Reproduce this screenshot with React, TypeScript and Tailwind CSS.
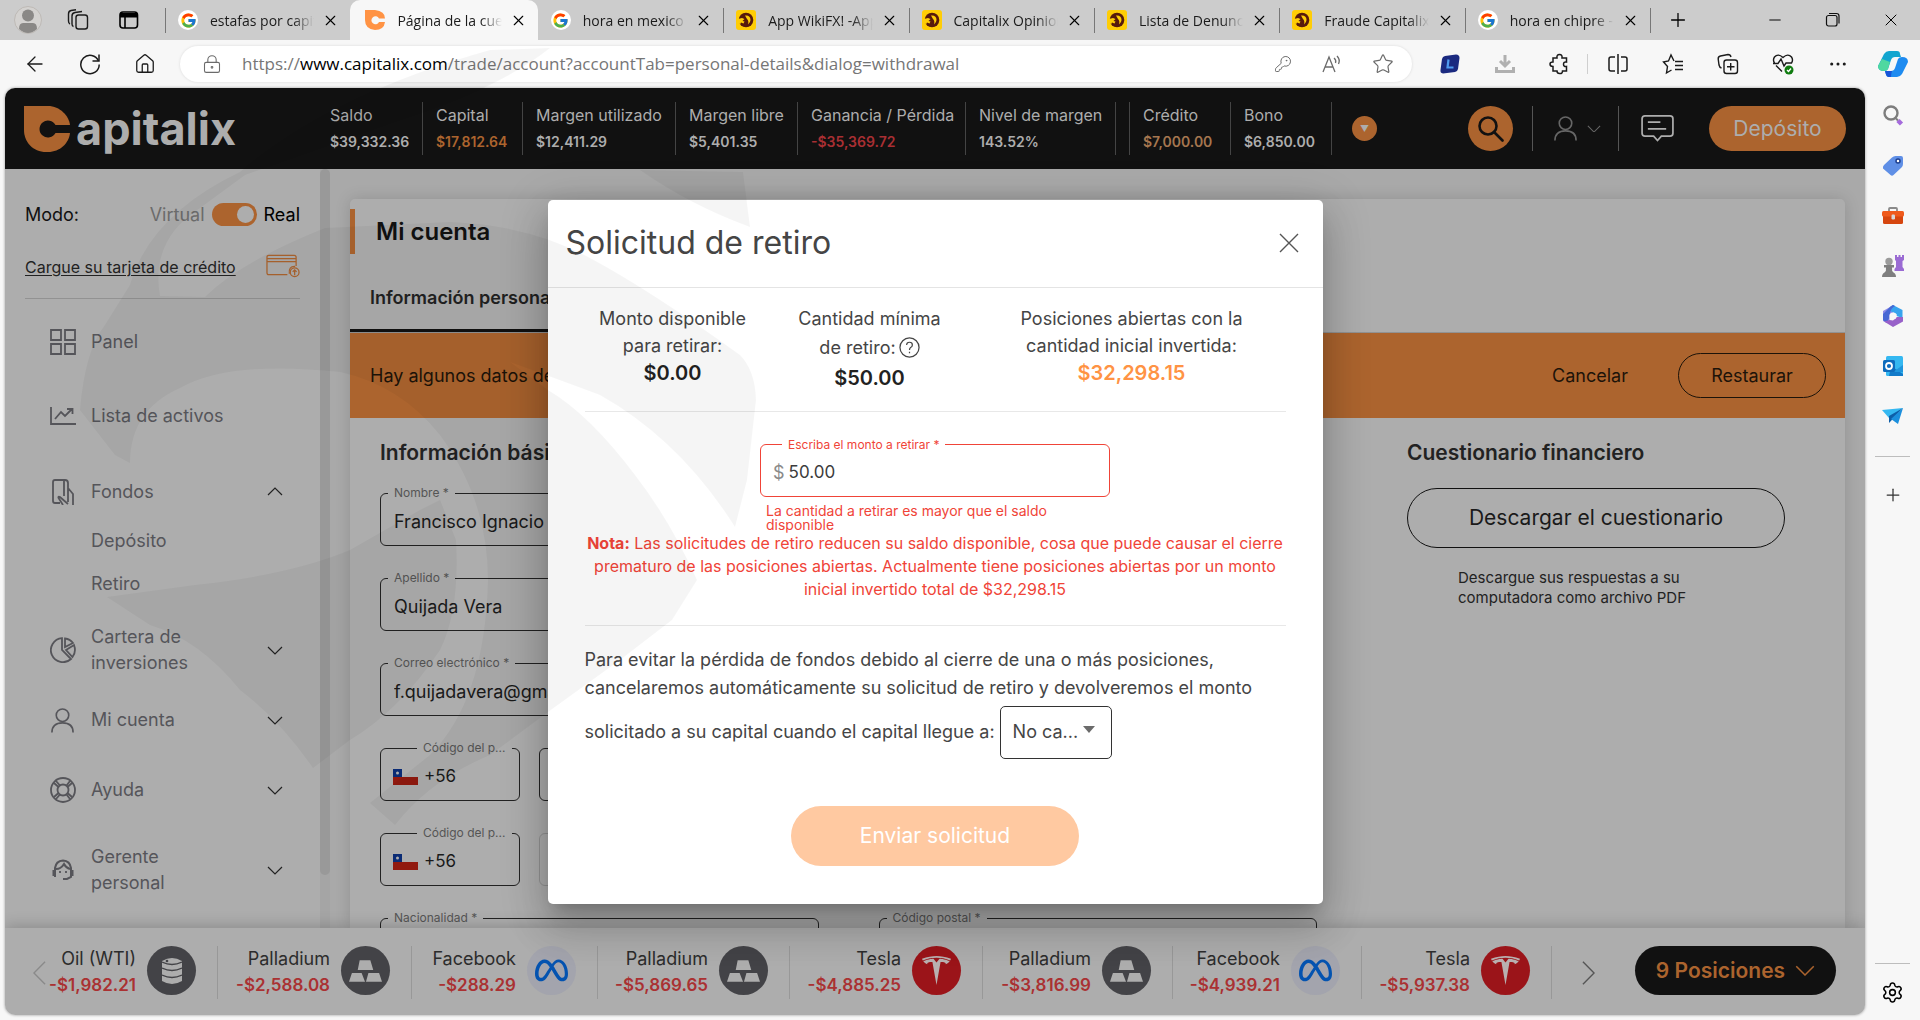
import type { ReactNode } from 'react'
import {
  ArrowLeft,
  Home as HomeIcon,
  KeyRound,
  LockKeyhole,
  Minus,
  Plus,
  Settings,
  Star,
  X,
} from 'lucide-react'
import { FaMeta } from 'react-icons/fa6'
import { FcGoogle } from 'react-icons/fc'
import { SiTesla } from 'react-icons/si'

type Brand = 'google' | 'capitalix' | 'wikifx'

const tabs: { title: string; icon: Brand; active?: boolean }[] = [
  { title: 'estafas por capit', icon: 'google' },
  { title: 'Página de la cuenta', icon: 'capitalix', active: true },
  { title: 'hora en mexico', icon: 'google' },
  { title: 'App WikiFX! -App', icon: 'wikifx' },
  { title: 'Capitalix Opinion', icon: 'wikifx' },
  { title: 'Lista de Denunc', icon: 'wikifx' },
  { title: 'Fraude Capitalix', icon: 'wikifx' },
  { title: 'hora en chipre -', icon: 'google' },
]

const stats = [
  { label: 'Saldo', value: '$39,332.36', width: 'w-[106px]', color: 'text-[#adadad]' },
  { label: 'Capital', value: '$17,812.64', width: 'w-[100px]', color: 'text-[#ac642e]' },
  { label: 'Margen utilizado', value: '$12,411.29', width: 'w-[153px]', color: 'text-[#adadad]' },
  { label: 'Margen libre', value: '$5,401.35', width: 'w-[122px]', color: 'text-[#adadad]' },
  { label: 'Ganancia / Pérdida', value: '-$35,369.72', width: 'w-[168px]', color: 'text-[#a92f33]' },
  { label: 'Nivel de margen', value: '143.52%', width: 'w-[150px]', color: 'text-[#adadad]' },
]

const credits = [
  { label: 'Crédito', value: '$7,000.00', width: 'w-[101px]', color: 'text-[#a5764f]' },
  { label: 'Bono', value: '$6,850.00', width: 'w-[101px]', color: 'text-[#adadad]' },
]

const positions = [
  { name: 'Oil (WTI)', value: '-$1,982.21', icon: 'oil', width: 'w-[172px]' },
  { name: 'Palladium', value: '-$2,588.08', icon: 'metal', width: 'w-[194px]' },
  { name: 'Facebook', value: '-$288.29', icon: 'meta', width: 'w-[186px]' },
  { name: 'Palladium', value: '-$5,869.65', icon: 'metal', width: 'w-[192px]' },
  { name: 'Tesla', value: '-$4,885.25', icon: 'tesla', width: 'w-[193px]' },
  { name: 'Palladium', value: '-$3,816.99', icon: 'metal', width: 'w-[190px]' },
  { name: 'Facebook', value: '-$4,939.21', icon: 'meta', width: 'w-[189px]' },
  { name: 'Tesla', value: '-$5,937.38', icon: 'tesla', width: 'w-[190px]' },
]

function CapitalixMark({ size, color }: { size: number; color: string }) {
  return (
    <svg viewBox="0 0 46 46" width={size} height={size} fill={color} className="shrink-0">
      <path d="M0 0H24C36 0 45 10 46 19V27C45 37 36 46 24 46H22C9 46 0 36 0 24Z" />
      <path d="M46 19H31.5A8.5 8.5 0 1 0 31.5 27H46Z" className="fill-[#111111]" />
    </svg>
  )
}

function TabIcon({ icon }: { icon: Brand }) {
  if (icon === 'google') {
    return (
      <span className="flex size-5 shrink-0 items-center justify-center rounded-full bg-white">
        <FcGoogle size={17} />
      </span>
    )
  }
  if (icon === 'capitalix') {
    return (
      <svg viewBox="0 0 20 20" width="20" height="20" className="shrink-0">
        <path d="M0 0H10Q20 1 20 8.5H14A4 4 0 1 0 14 12H20Q19 20 10 20Q0 19 0 10Z" fill="#ff9344" />
      </svg>
    )
  }
  return (
    <svg viewBox="0 0 20 20" width="20" height="20" className="shrink-0">
      <rect width="20" height="20" rx="3" fill="#ffcd05" />
      <circle cx="10" cy="10" r="7.3" fill="#571a0c" />
      <path d="M9 5.500Q14.500 5 14.500 10Q14.500 12.500 12 14.500Q13 10.500 11 9Z" fill="#ffcd05" />
      <path d="M2 9L6 8L8.500 9L6.500 11L8.500 11.500L7.500 13.500L5 12.500L4 14.500L2 12Z" fill="#ffcd05" />
    </svg>
  )
}

function TabBar() {
  return (
    <div className="flex h-10 shrink-0 items-center bg-[#cccccc]">
      <div className="flex w-[165px] shrink-0 items-center gap-[25px] pl-[14px]">
        <svg viewBox="0 0 28 28" width="28" height="28">
          <circle cx="14" cy="14" r="13.500" fill="#d4d2d0" stroke="#bdb9b5" />
          <circle cx="14" cy="9.500" r="6" fill="#8a8886" />
          <path d="M5 23Q5 17 9 17H19Q23 17 23 23Q14 31 5 23Z" fill="#8a8886" />
        </svg>
        {/* Workspaces */}
        <svg viewBox="0 0 22 22" width="22" height="22" fill="none" stroke="#1b1b1b" strokeWidth="1.4">
          <rect x="9" y="6" width="11.500" height="14" rx="2.500" />
          <path d="M6.500 17.500Q5 17 5 15V7Q5 4 8 3.500L15 2.500" />
          <path d="M3 15Q1.500 14.500 1.500 12V5Q1.500 2 4 1.500L9 .8" />
        </svg>
        {/* Tab actions */}
        <svg viewBox="0 0 20 20" width="20" height="20" fill="none" stroke="#000" strokeWidth="1.6" className="ml-[5px]">
          <rect x="1" y="2" width="17.500" height="16" rx="3" />
          <path d="M1 4.500H18.500M1 6H18.500" strokeWidth="3" />
          <path d="M6 7V18" />
        </svg>
      </div>
      <div className="flex h-full w-[1485px] min-w-0" role="tablist">
        {tabs.map((tab, i) => (
          <div
            key={i}
            role="tab"
            className={
              tab.active
                ? 'relative flex min-w-0 flex-1 items-center rounded-t-[10px] bg-[#f7f7f7] pr-[11px] pl-[15px]'
                : 'relative flex min-w-0 flex-1 items-center pr-[11px] pl-[13px]'
            }
          >
            {!tab.active && i !== 2 && <span className="absolute top-2 left-0 h-[25px] w-px bg-[#777777]" />}
            <TabIcon icon={tab.icon} />
            <span className="ml-3 flex-1 overflow-hidden text-[14px] whitespace-nowrap text-[#1b1b1b] [mask-image:linear-gradient(to_right,black_80%,transparent)]">
              {tab.title}
            </span>
            <button aria-label="Cerrar pestaña" className="ml-2">
              <X size={17} strokeWidth={1.6} />
            </button>
          </div>
        ))}
      </div>
      <div className="flex flex-1 items-center">
        <span className="mr-[16px] h-[25px] w-px bg-[#777777]" />
        <button aria-label="Nueva pestaña">
          <Plus size={22} strokeWidth={1.4} />
        </button>
        <div className="ml-auto flex w-[154px] items-center justify-between pr-[19px]">
          <button aria-label="Minimizar">
            <Minus size={18} strokeWidth={1.3} />
          </button>
          <button aria-label="Restaurar ventana">
            <svg viewBox="0 0 16 16" width="16" height="16" fill="none" stroke="#111" strokeWidth="1.200">
              <rect x="1.500" y="3.500" width="10.500" height="10.500" rx="2" />
              <path d="M4 1.500H11.500Q14 1.500 14 4V11.500" />
            </svg>
          </button>
          <button aria-label="Cerrar">
            <X size={20} strokeWidth={1.2} />
          </button>
        </div>
      </div>
    </div>
  )
}

function ToolbarIcon({ children, label }: { children: ReactNode; label: string }) {
  return (
    <button aria-label={label} className="flex w-[55px] shrink-0 items-center justify-center text-[#1b1b1b]">
      {children}
    </button>
  )
}

function Toolbar() {
  return (
    <div className="flex h-12 shrink-0 items-center bg-[#f7f7f7] pl-[7px]">
      <ToolbarIcon label="Atrás">
        <ArrowLeft size={24} strokeWidth={1.3} />
      </ToolbarIcon>
      <ToolbarIcon label="Actualizar">
        <svg viewBox="0 0 22 22" width="22" height="22" fill="none" stroke="currentColor" strokeWidth="1.500">
          <path d="M19.500 8A9.200 9.200 0 1 0 20.200 11.500" />
          <path d="M20 1.500V8H13.500" />
        </svg>
      </ToolbarIcon>
      <ToolbarIcon label="Inicio">
        <HomeIcon size={22} strokeWidth={1.4} />
      </ToolbarIcon>
      <div className="ml-2 flex h-9 flex-1 items-center rounded-full bg-white pr-[18px] pl-[22px] text-[#6b6b6b] shadow-[0_0_3px_rgba(0,0,0,0.12)]">
        <LockKeyhole size={20} strokeWidth={1.3} />
        <div className="ml-5 flex-1 text-[17px] whitespace-nowrap text-[#767676]">
          https://<span className="text-black">www.capitalix.com</span>
          /trade/account?accountTab=personal-details&amp;dialog=withdrawal
        </div>
        <div className="flex items-center gap-[29px]">
          <KeyRound size={18} strokeWidth={1.3} />
          <svg viewBox="0 0 22 20" width="22" height="20" fill="none" stroke="currentColor" strokeWidth="1.300">
            <path d="M2 18L8 3L14 18M4 13H12" />
            <path d="M13 4Q15.500 6 14.500 9M16 2Q19.500 5.500 17.500 10" />
          </svg>
          <Star size={22} strokeWidth={1.3} />
        </div>
      </div>
      <div className="flex items-center pl-[10px]">
        <ToolbarIcon label="Extensión L">
          <svg viewBox="0 0 20 20" width="20" height="20">
            <path d="M5 2L16 .5Q19.500 .5 19.500 4L18 15Q17.500 17.500 15 18L3 19.500Q0 19 .5 16L2 5Q2.500 2.500 5 2Z" fill="#1b2a80" />
            <path d="M8.500 5.500L7.500 13.500H13.500" fill="none" stroke="#4f9bf0" strokeWidth="2.200" />
          </svg>
        </ToolbarIcon>
        <ToolbarIcon label="Descargas">
          <svg viewBox="0 0 22 22" width="22" height="22" fill="none" stroke="#b0b0b0" strokeWidth="3">
            <path d="M11 2V11M6 8L11 13L16 8" />
            <path d="M2.500 14V18.500H19.500V14" />
          </svg>
        </ToolbarIcon>
        <ToolbarIcon label="Extensiones">
          <svg viewBox="0 0 22 22" width="22" height="22" fill="none" stroke="currentColor" strokeWidth="1.500">
            <path d="M4 5H8Q7.500 1.500 10.500 1.500Q13.500 1.500 13 5H17.500V9Q14.500 8.500 14.500 11.200Q14.500 14 17.500 13.500V18H13.500Q13.500 21 10.500 20.500Q8 20.500 8 18H4V13.500Q1 13.500 1 11Q1 9 4 9Z" />
          </svg>
        </ToolbarIcon>
        <span className="mr-[2px] h-5 w-px bg-[#cfcfcf]" />
        <ToolbarIcon label="Pantalla dividida">
          <svg viewBox="0 0 22 22" width="22" height="22" fill="none" stroke="currentColor" strokeWidth="1.500">
            <path d="M8 4H4Q2 4 2 6V16Q2 18 4 18H8M14 4H18Q20 4 20 6V16Q20 18 18 18H14M11 1V21" />
          </svg>
        </ToolbarIcon>
        <ToolbarIcon label="Favoritos">
          <svg viewBox="0 0 22 22" width="22" height="22" fill="none" stroke="currentColor" strokeWidth="1.400">
            <path d="M12 8L9 2L6.500 8L1.500 9L5.500 13.500L4.500 20L9.500 17M13 8.500H21M13 12.500H21M13 16.500H21" />
          </svg>
        </ToolbarIcon>
        <ToolbarIcon label="Colecciones">
          <svg viewBox="0 0 22 22" width="22" height="22" fill="none" stroke="currentColor" strokeWidth="1.400">
            <rect x="7" y="7" width="13.500" height="13.500" rx="2.500" />
            <path d="M13.700 10V17.500M10 13.700H17.500M4.500 15Q2.500 14.500 2 12L1.200 6Q1 3.500 3.500 3L11 1.500Q13.500 1.500 14 4" />
          </svg>
        </ToolbarIcon>
        <ToolbarIcon label="Rendimiento">
          <svg viewBox="0 0 22 22" width="22" height="22" fill="none" stroke="currentColor" strokeWidth="1.400">
            <path d="M2.500 10Q.5 7 2.500 4Q6 0 11 4.500Q16 0 19.500 4Q21.500 7 19.500 10M4 12.500L10 18.500M1 10.500H6L9 6L12 13L14 10H20" />
            <circle cx="17" cy="17" r="4.500" fill="#107c10" stroke="none" />
            <path d="M15 17L16.500 18.500L19 15.500" stroke="#fff" />
          </svg>
        </ToolbarIcon>
        <ToolbarIcon label="Configuración y más">
          <svg viewBox="0 0 20 6" width="18" height="6" fill="currentColor">
            <circle cx="3" cy="3" r="1.700" />
            <circle cx="10" cy="3" r="1.700" />
            <circle cx="17" cy="3" r="1.700" />
          </svg>
        </ToolbarIcon>
        <ToolbarIcon label="Copilot">
          <svg viewBox="0 0 30 26" width="30" height="26">
            <path d="M6 3Q8 0 11 0H19Q22 0 22 3L23 6H17Q14 6 13 9L10 18Q9 20 6 20Q0 20 0 15Z" fill="#12a5cf" />
            <path d="M4 8L0 15Q0 20 6 20Q9 20 10 18L12 11Z" fill="#4fd8a0" />
            <path d="M24 23Q22 26 19 26H11Q8 26 8 23L7 20H13Q16 20 17 17L20 8Q21 6 24 6Q30 6 30 11Z" fill="#1e8bf0" />
            <path d="M8 20H14Q13 23 13 26H11Q8 26 7 20Z" fill="#1755d8" />
          </svg>
        </ToolbarIcon>
      </div>
    </div>
  )
}

function EdgeSidebar() {
  return (
    <aside className="flex w-[55px] shrink-0 flex-col items-center pt-4 pb-[16px]">
      <div className="flex flex-col items-center gap-[26px]">
        <svg viewBox="0 0 24 24" width="24" height="24" fill="none">
          <circle cx="10" cy="9" r="6.500" stroke="#7d7d7d" strokeWidth="2.400" />
          <path d="M15 14.500L17 16.500" stroke="#7d7d7d" strokeWidth="2" />
          <path d="M17 16.500L20.500 20" stroke="#a56bdc" strokeWidth="4.500" />
        </svg>
        <svg viewBox="0 0 24 24" width="24" height="24">
          <path d="M2 14.500Q1.500 12.500 3 11L11 3.500Q12.500 2 14.500 2H20Q22 2 22 4V10Q22 12 20.500 13.500L12.500 21Q11 22.500 9.500 21Z" fill="#5f8fe6" />
          <circle cx="17" cy="7" r="2" fill="#fff" stroke="#1e3f8e" strokeWidth="1.500" />
        </svg>
        <svg viewBox="0 0 24 24" width="24" height="24">
          <path d="M8 7V5Q8 4 9 4H15Q16 4 16 5V7" fill="none" stroke="#8a8a8a" strokeWidth="1.800" />
          <rect x="2" y="8" width="20" height="12" rx="1.500" fill="#d6460f" />
          <rect x="1" y="7" width="22" height="5.500" rx="1.500" fill="#ef5a1c" />
          <rect x="10.500" y="10.500" width="3.500" height="5" rx="1.200" fill="#d8d8d8" />
        </svg>
        <svg viewBox="0 0 24 24" width="24" height="24">
          <path d="M14 1H16V3H17.500V1H19.500V3H21V1H23V6L21.500 7V13L23 15V17H13.500V15L15 13V7L14 6Z" fill="#9a6bd3" />
          <circle cx="8" cy="7.500" r="3.700" fill="#9b9b9b" />
          <path d="M3 11H13V13.500H11Q10.500 17 12.500 18.500Q15 19.500 15 23H1Q1 19.500 3.500 18.500Q5.500 17 5 13.500H3Z" fill="#7f7f7f" />
        </svg>
        <svg viewBox="0 0 24 24" width="24" height="24">
          <path d="M9 3L12 1V9L8.500 11V16L6 19L2 17V7Z" fill="#8e8be8" />
          <path d="M12 1L21.500 6V14L15.500 12V10L9 7V3Z" fill="#37a3ee" />
          <path d="M9 3L12 1L14 2Q10 4 9 9L8.500 13L6 19L2 16V10Z" fill="#4767d4" />
          <path d="M22 13V17.500L12 23L3 17.500L8.500 16L12 16.500L15.500 13Z" fill="#9861c9" />
          <circle cx="12" cy="12" r="3.600" fill="#f7f7f7" />
        </svg>
        <svg viewBox="0 0 24 24" width="24" height="24">
          <rect x="5" y="2" width="17" height="20" rx="1.500" fill="#35b8f1" />
          <path d="M10 12L22 20V22H8Z" fill="#127ac9" />
          <path d="M22 11L12 18H22Z" fill="#1f95dd" />
          <rect x="2" y="6" width="12" height="12" rx="1.500" fill="#0f6cbd" />
          <circle cx="8" cy="12" r="3" fill="none" stroke="#fff" strokeWidth="1.800" />
        </svg>
        <svg viewBox="0 0 24 24" width="24" height="24">
          <path d="M1 6L22 4L8 14Z" fill="#35b8f1" />
          <path d="M8 12L22 4L8 19Z" fill="#0d5ea8" />
          <path d="M10 15L22 4L17 20Z" fill="#1b8fdd" />
        </svg>
      </div>
      <span className="mt-[28px] h-px w-[35px] bg-[#bdbdbd]" />
      <button aria-label="Personalizar" className="mt-[28px] text-[#333333]">
        <Plus size={20} strokeWidth={1.5} />
      </button>
      <span className="mt-auto h-px w-[35px] bg-[#bdbdbd]" />
      <button aria-label="Configuración" className="mt-[17px]">
        <Settings size={23} strokeWidth={1.6} />
      </button>
    </aside>
  )
}

function Stat({ label, value, width, color }: { label: string; value: string; width: string; color: string }) {
  return (
    <div className={`${width} flex h-[53px] shrink-0 flex-col justify-between border-r border-[#444444] pl-[13px] whitespace-nowrap`}>
      <span className="text-base leading-[26px] text-[#adadad]">{label}</span>
      <span className={`${color} text-sm leading-[26px] font-semibold`}>{value}</span>
    </div>
  )
}

function SiteHeader() {
  return (
    <header className="flex h-[81px] shrink-0 items-center bg-[#111111] px-[19px]">
      <div className="flex w-[293px] shrink-0 items-center gap-[6px]">
        <CapitalixMark size={46} color="#ac642e" />
        <span className="text-[45px] leading-[46px] font-bold text-[#adadad]">apitalix</span>
      </div>
      <div className="flex">
        {stats.map((s) => (
          <Stat key={s.label} {...s} />
        ))}
        <span className="ml-[13px] h-[53px] w-px bg-[#444444]" />
        {credits.map((s) => (
          <Stat key={s.label} {...s} />
        ))}
      </div>
      <button
        aria-label="Más"
        className="ml-5 flex size-[25px] shrink-0 items-center justify-center rounded-full bg-[#ac642e] text-[9px] text-[#adadad]"
      >
        ▼
      </button>
      <div className="ml-auto flex items-center">
        <button aria-label="Buscar" className="flex size-[45px] items-center justify-center rounded-full bg-[#ac642e]">
          <svg viewBox="0 0 26 26" width="26" height="26" fill="none" stroke="#111" strokeWidth="2.600" strokeLinecap="round">
            <circle cx="10" cy="10" r="8.500" />
            <path d="M16 16L24.500 24.500" />
          </svg>
        </button>
        <span className="ml-[19px] h-[45px] w-px bg-[#555555]" />
        <button aria-label="Perfil" className="ml-5 flex items-center gap-[9px] text-[#666666]">
          <UserIcon />
          <Chevron size={14} />
        </button>
        <span className="ml-[17px] h-[45px] w-px bg-[#555555]" />
        <svg viewBox="0 0 34 28" width="33" height="27" fill="none" stroke="#adadad" strokeWidth="1.800" className="ml-[22px]">
          <path d="M4 1H30Q33 1 33 4V19Q33 22 30 22H21L17 26.500L13 22H4Q1 22 1 19V4Q1 1 4 1Z" />
          <path d="M7 7.500H20M7 14.500H26" />
        </svg>
        <button className="ml-[35px] h-[45px] w-[137px] rounded-full bg-[#ac642e] text-[21px] text-[#adadad]">
          Depósito
        </button>
      </div>
    </header>
  )
}

function Chevron({ up, size = 16 }: { up?: boolean; size?: number }) {
  return (
    <svg viewBox="0 0 16 9" width={size} height={size * 0.5625} fill="none" stroke="currentColor" strokeWidth="1.200" className="shrink-0">
      <path d={up ? 'M1 8L8 1L15 8' : 'M1 1L8 8L15 1'} />
    </svg>
  )
}

function UserIcon() {
  return (
    <svg viewBox="0 0 26 26" width="25" height="25" fill="none" stroke="currentColor" strokeWidth="1.700" className="shrink-0">
      <circle cx="13" cy="7.500" r="6.500" />
      <path d="M2 25.500Q2 15.500 13 15.500Q24 15.500 24 25.500" />
    </svg>
  )
}

const menuIconProps = {
  viewBox: '0 0 26 26',
  width: 26,
  height: 26,
  fill: 'none',
  stroke: 'currentColor',
  strokeWidth: 1.8,
  className: 'shrink-0',
}

function MenuItem({ icon, text, chevron, tall }: { icon: ReactNode; text: string; chevron?: 'up' | 'down'; tall?: string }) {
  return (
    <li className={`${tall ?? 'h-[70px]'} flex items-center pr-[37px] text-[#55555a]`}>
      <span className="flex w-[26px] shrink-0">{icon}</span>
      <a href="#" className="ml-[15px] w-[140px] text-lg leading-[26px]">
        {text}
      </a>
      {chevron && (
        <span className="ml-auto text-[#222222]">
          <Chevron up={chevron === 'up'} />
        </span>
      )}
    </li>
  )
}

function SideMenu() {
  return (
    <nav className="relative flex w-[315px] shrink-0 flex-col">
      <div className="mx-5 flex h-[85px] items-start pt-[34px] text-lg leading-[23px] text-[#111111]">
        <span>Modo:</span>
        <label className="ml-auto flex items-center gap-[7px]">
          <span className="text-[#6b6b6b]">Virtual</span>
          <input
            type="checkbox"
            role="switch"
            defaultChecked
            className="relative h-[23px] w-[45px] appearance-none rounded-full bg-[#ac642e] before:absolute before:top-[3px] before:right-[3px] before:size-[17px] before:rounded-full before:bg-[#adadad]"
          />
          <span className="text-black">Real</span>
        </label>
      </div>
      <div className="mx-5 flex h-[45px] items-start justify-between border-b border-[#929292]">
        <a href="#" className="text-base leading-[26px] text-[#222222] underline underline-offset-2">
          Cargue su tarjeta de crédito
        </a>
        <svg viewBox="0 0 35 24" width="34" height="24" fill="none" stroke="#ac642e" strokeWidth="1.300">
          <path d="M22 21H3Q1 21 1 19V3Q1 1 3 1H29Q31 1 31 3V12M1 4.500H31M1 7.500H31" />
          <path d="M24 20Q23 12 30 12.500" />
          <circle cx="29.500" cy="18.500" r="4.500" />
          <path d="M29.500 21.500V16M27.500 18L29.500 16L31.500 18" />
        </svg>
      </div>
      <ul className="flex flex-col pt-[6px] pl-[45px]">
        <MenuItem
          text="Panel"
          tall="h-[74px]"
          icon={
            <svg {...menuIconProps}>
              <path d="M1 1H11V11H1ZM15 1H25V11H15ZM1 15H11V25H1ZM15 15H25V25H15Z" />
            </svg>
          }
        />
        <MenuItem
          text="Lista de activos"
          tall="h-[74px]"
          icon={
            <svg {...menuIconProps}>
              <path d="M1 4V21H26M5 16L11 9L15 13L22 6M17 6H22.500V11" />
            </svg>
          }
        />
        <MenuItem
          text="Fondos"
          chevron="up"
          tall="h-[77px]"
          icon={
            <svg {...menuIconProps}>
              <path d="M10 24H5Q3 24 3 22V3Q3 1 5 1H15Q18 1 18 4V23M14 1V17M18 9L23 15V26M18 25L10 18Q8 17 8.500 19L13 26" />
            </svg>
          }
        />
        <li className="h-[43px] pl-[41px] text-lg leading-[22px] text-[#55555a]">
          <a href="#">Depósito</a>
        </li>
        <li className="h-[42px] pl-[41px] text-lg leading-[22px] text-[#55555a]">
          <a href="#">Retiro</a>
        </li>
        <MenuItem
          text="Cartera de inversiones"
          chevron="down"
          icon={
            <svg {...menuIconProps}>
              <path d="M12 1.200A12 12 0 1 0 21 22L12 13Z" />
              <path d="M15 10V1.500Q20 2 23 6ZM16 13L24 8Q26.500 15 22.500 20Z" />
            </svg>
          }
        />
        <MenuItem text="Mi cuenta" chevron="down" icon={<UserIcon />} />
        <MenuItem
          text="Ayuda"
          chevron="down"
          icon={
            <svg {...menuIconProps}>
              <circle cx="13" cy="13" r="12" />
              <circle cx="13" cy="13" r="5.500" />
              <path d="M4 6L8.500 10M6 4L10 8.500M20 4L16.500 8.500M22 6L17.500 10M4 20L8.500 16M6 22L10 17.500M20 22L16.500 17.500M22 20L17.500 16" />
            </svg>
          }
        />
        <MenuItem
          text="Gerente personal"
          chevron="down"
          tall="h-[90px]"
          icon={
            <svg {...menuIconProps}>
              <path d="M5 20V11Q6 4 13 3.500Q20 4 21 11V20L17 22H13M3.500 13V19M22.500 13V19" strokeWidth="2" />
              <path d="M6 12Q11 12 14 7Q16 11 20 12" strokeWidth="2" />
              <path d="M10 14V16M16 14V16" />
            </svg>
          }
        />
      </ul>
    </nav>
  )
}

function Field({ id, label, value }: { id: string; label: string; value?: string }) {
  return (
    <fieldset className="h-[59px] w-full min-w-0 rounded-md border border-[#222222] px-[7px]">
      <legend className="px-1.5 text-xs leading-3 text-[#555555]">
        <label htmlFor={id}>{label}</label>
      </legend>
      <input id={id} defaultValue={value} className="h-[45px] w-full bg-transparent px-1.5 text-lg text-[#1a1a1a] outline-none" />
    </fieldset>
  )
}

function PhoneFields({ id, optional }: { id: string; optional?: boolean }) {
  return (
    <div className="flex gap-[19px]">
      <fieldset className="h-[59px] w-[140px] min-w-0 shrink-0 rounded-md border border-[#222222] px-3">
        <legend className="ml-[24px] px-1.5 text-xs leading-3 whitespace-nowrap text-[#555555]">
          <label htmlFor={id}>Código del p...</label>
        </legend>
        <div className="flex h-[45px] items-center gap-[6px]">
          <svg viewBox="0 0 25 16" width="25" height="16" className="shrink-0">
            <rect width="25" height="16" fill="#adadad" />
            <rect y="8" width="25" height="8" fill="#91190f" />
            <rect width="9" height="8" fill="#0a2b75" />
            <circle cx="4.500" cy="4" r="1.500" fill="#adadad" />
          </svg>
          <input id={id} defaultValue="+56" className="w-full min-w-0 bg-transparent text-[17px] text-[#1a1a1a] outline-none" />
        </div>
      </fieldset>
      <input
        aria-label="Teléfono"
        className={`${optional ? 'border-[#929292]' : 'border-[#222222]'} mt-[6px] h-[53px] min-w-0 flex-1 rounded-md border bg-transparent px-3 text-lg outline-none`}
      />
    </div>
  )
}

function AccountPage() {
  return (
    <div className="min-w-0 flex-1 overflow-hidden bg-[#a9a9a9] px-5 pt-[30px]">
      <div className="h-full rounded-t-[5px] bg-[#adadad] shadow-[0_0_16px_rgba(0,0,0,0.14)]">
        <div className="flex h-[134px] flex-col justify-between border-b border-[#929292] pt-[10px]">
          <h1 className="border-l-[5px] border-[#ac642e] pl-[21px] text-2xl leading-[45px] font-semibold text-[#111111]">
            Mi cuenta
          </h1>
          <div className="flex">
            <button className="border-b-[3px] border-[#111111] px-5 pb-[18px] text-lg leading-[26px] font-semibold text-[#222222]">
              Información personal
            </button>
          </div>
        </div>
        <div className="flex h-[85px] items-center bg-[#ac642e] pr-[19px] pl-5 text-lg text-[#1c1309]">
          <p>Hay algunos datos del usuario sin guardar</p>
          <button className="ml-auto">Cancelar</button>
          <button className="ml-[50px] h-[45px] w-[148px] rounded-full border border-[#1c1309]">
            Restaurar
          </button>
        </div>
        <div className="flex justify-between pr-[60px] pl-[30px]">
          <section className="w-[937px]">
            <h2 className="mt-[21px] text-[21px] leading-7 font-semibold text-[#222222]">Información básica</h2>
            <div className="mt-5 grid grid-cols-2 gap-x-[60px]">
              <div className="flex flex-col gap-[26px]">
                <Field id="nombre" label="Nombre *" value="Francisco Ignacio" />
                <Field id="apellido" label="Apellido *" value="Quijada Vera" />
                <Field id="correo" label="Correo electrónico *" value="f.quijadavera@gmail.com" />
                <PhoneFields id="codigo-1" />
                <PhoneFields id="codigo-2" optional />
                <Field id="nacionalidad" label="Nacionalidad *" />
              </div>
              <div className="flex flex-col justify-end">
                <Field id="postal" label="Código postal *" />
              </div>
            </div>
          </section>
          <section className="w-[378px]">
            <h2 className="mt-[21px] text-[21px] leading-7 font-semibold text-[#222222]">Cuestionario financiero</h2>
            <button className="mt-[21px] h-[60px] w-full rounded-full border border-[#111111] text-[21px] text-[#1a1a1a]">
              Descargar el cuestionario
            </button>
            <p className="mt-5 ml-[51px] w-[260px] text-[15px] leading-5 text-[#222222]">
              Descargue sus respuestas a su computadora como archivo PDF
            </p>
          </section>
        </div>
      </div>
    </div>
  )
}

function AssetIcon({ icon }: { icon: string }) {
  if (icon === 'meta') {
    return (
      <span className="flex size-[49px] shrink-0 items-center justify-center rounded-full bg-[#a3a4ad] text-[#0453b0]">
        <FaMeta size={33} />
      </span>
    )
  }
  if (icon === 'tesla') {
    return (
      <span className="flex size-[49px] shrink-0 items-center justify-center rounded-full bg-[#9b1419] text-[#b9b0b0]">
        <SiTesla size={29} />
      </span>
    )
  }
  return (
    <span className="flex size-[49px] shrink-0 items-center justify-center rounded-full bg-[#434347]">
      {icon === 'oil' ? (
        <svg viewBox="0 0 20 26" width="20" height="26">
          <path d="M0 3Q10 -3 20 3V23Q10 29 0 23Z" fill="#adadad" />
          <path d="M0 4Q10 9 20 4M0 10Q10 15 20 10M0 17Q10 22 20 17" fill="none" stroke="#434347" strokeWidth="1.300" />
          <circle cx="5" cy="3" r="1.300" fill="#434347" />
        </svg>
      ) : (
        <svg viewBox="0 0 34 22" width="33" height="22" fill="#adadad">
          <path d="M11 0H22L25 10H9ZM3 13H13L16.500 22H0ZM20 13H31L34 22H17.500Z" />
        </svg>
      )}
    </span>
  )
}

function PositionsBar() {
  return (
    <footer className="relative flex h-[87px] shrink-0 items-start bg-[#adadad] pt-[18px] pr-[29px] pl-[28px] shadow-[0_-2px_14px_rgba(0,0,0,0.2)]">
      <button aria-label="Anterior" className="flex h-[53px] items-center text-[#8a8a8a]">
        <svg viewBox="0 0 14 26" width="13" height="26" fill="none" stroke="currentColor" strokeWidth="1.500">
          <path d="M13 1L1 13L13 25" />
        </svg>
      </button>
      {positions.map((p, i) => (
        <div
          key={i}
          className={`${p.width} flex h-[53px] shrink-0 items-start justify-end gap-[11px] border-r border-[#989898] pr-[21px] whitespace-nowrap`}
        >
          <div className="text-right">
            <div className="text-lg leading-[26px] text-[#2c2c2c]">{p.name}</div>
            <div className="text-[17px] leading-[26px] font-semibold text-[#aa3132]">{p.value}</div>
          </div>
          <AssetIcon icon={p.icon} />
        </div>
      ))}
      <button aria-label="Siguiente" className="ml-[30px] flex h-[53px] items-center text-[#555555]">
        <svg viewBox="0 0 14 26" width="13" height="26" fill="none" stroke="currentColor" strokeWidth="1.500">
          <path d="M1 1L13 13L1 25" />
        </svg>
      </button>
      <button className="ml-auto flex h-[49px] w-[201px] items-center justify-center gap-[10px] rounded-full bg-[#111111] text-[21px] font-semibold text-[#ac642e]">
        9 Posiciones
        <Chevron size={20} />
      </button>
    </footer>
  )
}

function WithdrawalDialog() {
  return (
    <div
      role="dialog"
      aria-labelledby="withdrawal-title"
      className="w-[775px] rounded-[5px] bg-white text-[#454545] shadow-[0_11px_15px_-7px_rgba(0,0,0,0.2),0_24px_38px_3px_rgba(0,0,0,0.14),0_9px_46px_8px_rgba(0,0,0,0.12)]"
    >
      <div className="flex h-[88px] items-center justify-between border-b border-[#e4e4e4] pr-6 pl-[18px]">
        <h2 id="withdrawal-title" className="text-[32px]">
          Solicitud de retiro
        </h2>
        <button aria-label="Cerrar diálogo" className="text-[#555555]">
          <svg viewBox="0 0 20 20" width="20" height="20" fill="none" stroke="currentColor" strokeWidth="1.400">
            <path d="M1 1L19 19M19 1L1 19" />
          </svg>
        </button>
      </div>
      <div className="px-[37px]">
        <div className="flex h-[124px] border-b border-[#e8e8e8] pt-[17px] text-center text-lg leading-[27px]">
          <div className="w-[176px]">
            <p>Monto disponible para retirar:</p>
            <p className="text-xl leading-[29px] font-semibold text-[#222222]">$0.00</p>
          </div>
          <div className="w-[218px]">
            <p>Cantidad mínima</p>
            <p className="flex h-8 items-center justify-center gap-[3px]">
              de retiro:
              <svg viewBox="0 0 22 22" width="21" height="21" fill="none" stroke="currentColor" strokeWidth="1.300">
                <circle cx="11" cy="11" r="10" />
                <path d="M8 8.500Q8 5.500 11 5.500Q14 5.500 14 8.300Q14 10 12.200 11Q11 11.800 11 13.500M11 15.500V17" />
              </svg>
            </p>
            <p className="text-xl leading-[29px] font-semibold text-[#222222]">$50.00</p>
          </div>
          <div className="w-[306px]">
            <p>
              Posiciones abiertas con la
              <br />
              cantidad inicial invertida:
            </p>
            <p className="text-xl leading-[29px] font-semibold text-[#ff9344]">$32,298.15</p>
          </div>
        </div>
        <div className="flex h-[214px] flex-col items-center border-b border-[#e8e8e8] pt-[27px] text-[#f04438]">
          <fieldset className="h-[58px] w-[350px] rounded-md border border-[#f04438] px-3">
            <legend className="ml-[9px] px-1.5 text-xs leading-3">
              <label htmlFor="monto">Escriba el monto a retirar *</label>
            </legend>
            <div className="flex h-11 items-center gap-1 text-lg">
              <span className="text-[#8a8a8a]">$</span>
              <input id="monto" defaultValue="50.00" className="w-full bg-transparent text-[17px] text-[#3c3c3c] outline-none" />
            </div>
          </fieldset>
          <p className="mt-[7px] w-[338px] pr-[40px] text-sm leading-[14px]">
            La cantidad a retirar es mayor que el saldo disponible
          </p>
          <p className="text-center text-base leading-[23px] whitespace-nowrap">
            <b className="font-bold">Nota:</b> Las solicitudes de retiro reducen su saldo disponible, cosa que puede causar el cierre
            <br />
            prematuro de las posiciones abiertas. Actualmente tiene posiciones abiertas por un monto
            <br />
            inicial invertido total de $32,298.15
          </p>
        </div>
        <div className="pt-[20px] text-lg leading-7 whitespace-nowrap">
          <p>
            Para evitar la pérdida de fondos debido al cierre de una o más posiciones,
            <br />
            cancelaremos automáticamente su solicitud de retiro y devolveremos el monto
          </p>
          <div className="mt-1 flex items-center gap-[5px]">
            <label htmlFor="limite">solicitado a su capital cuando el capital llegue a:</label>
            <div className="relative">
              <select
                id="limite"
                className="h-[53px] w-[112px] appearance-none rounded-[5px] border border-[#333333] bg-transparent pl-3 text-lg"
              >
                <option>No ca...</option>
              </select>
              <svg viewBox="0 0 12 7" width="12" height="7" fill="#6b6b6b" className="pointer-events-none absolute top-5 right-[17px]">
                <path d="M0 0H12L6 7Z" />
              </svg>
            </div>
          </div>
        </div>
        <div className="flex justify-center pt-[47px] pb-[38px]">
          <button className="h-[60px] w-[288px] rounded-full bg-[#ffc9a1] text-[21px] text-white">Enviar solicitud</button>
        </div>
      </div>
    </div>
  )
}

// Faint emblem lying over the whole window
function Emblem() {
  return (
    <svg viewBox="0 0 800 850" width="800" height="850" className="pointer-events-none absolute top-0 left-0" fill="#000" fillOpacity="0.04">
      <path d="M550 48L490 50Q330 95 240 172Q150 215 130 285L105 325Q85 350 80 410L115 455L130 463Q130 410 180 388Q230 360 340 372Q400 385 440 435Q488 500 488 580Q485 700 430 755L370 803L395 825Q430 780 490 755L548 712L620 660L672 620L697 580Q670 520 635 475Q590 415 548 390L510 362Q560 380 600 395Q680 440 735 527L747 480L756 400Q755 370 740 355Q650 290 590 258Q530 225 450 222L325 228Q240 262 205 297L160 296Q150 240 200 208L245 175Q330 145 400 120Q500 88 550 48Z" />
      <path d="M107 597L195 585Q290 575 350 550L420 510L440 500L456 540Q460 610 440 650Q400 710 350 740L313 768Q280 720 240 690Q200 640 150 625Z" />
      <path d="M640 170L743 172L750 227Q690 205 640 170Z" />
    </svg>
  )
}

export default function App() {
  return (
    <div className="relative flex h-screen flex-col overflow-hidden bg-[#f7f7f7] font-['Inter',sans-serif]">
      <div className="shrink-0 font-['Open_Sans',sans-serif]">
        <TabBar />
        <Toolbar />
      </div>
      <div className="flex min-h-0 flex-1 pl-[5px]">
        <div className="relative mb-[5px] flex min-w-0 flex-1 flex-col overflow-hidden rounded-[10px] shadow-[0_0_3px_rgba(0,0,0,0.4)]">
          <SiteHeader />
          <div className="flex min-h-0 flex-1 overflow-hidden bg-[#adadad]">
            <SideMenu />
            <div className="w-[10px] shrink-0 bg-[#a5a5a5]">
              <div className="h-[93%] w-full rounded-full bg-[#999999]" />
            </div>
            <main className="flex min-w-0 flex-1 overflow-hidden">
              <AccountPage />
            </main>
          </div>
          <PositionsBar />
          <div className="absolute inset-0 flex items-center justify-center">
            <WithdrawalDialog />
          </div>
        </div>
        <EdgeSidebar />
      </div>
      <Emblem />
    </div>
  )
}
